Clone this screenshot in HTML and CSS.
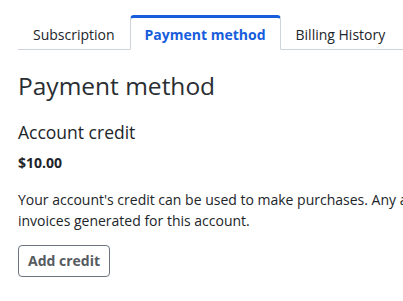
FILE: index.html
```html
<!DOCTYPE html>
<html>
<head>
<meta charset="utf-8">
<link rel="stylesheet" href="styles.css">
</head>
<body>
<div class="page">
  <ul class="tabs">
    <li class="tab">Subscription</li>
    <li class="tab active">Payment method</li>
    <li class="tab">Billing History</li>
  </ul>
  <h1 class="title">Payment method</h1>
  <h2 class="subtitle">Account credit</h2>
  <p class="amount">$10.00</p>
  <p class="desc">Your account's credit can be used to make purchases. Any available credit will be automatically applied towards invoices generated for this account.</p>
  <button class="btn">Add credit</button>
</div>
</body>
</html>
```
FILE: styles.css
```css
html, body {
  margin: 0;
  padding: 0;
  background: #fff;
  overflow: hidden;
}
body {
  font-family: "Open Sans", "Liberation Sans", sans-serif;
  font-size: 14px;
  line-height: 21px;
  color: #212529;
}
.page {
  width: 780px;
  padding: 15px 0 0 18px;
}
.tabs {
  list-style: none;
  margin: 0;
  padding: 0;
  display: flex;
  border-bottom: 1px solid #ced4da;
}
.tab {
  padding: 6px 14px 4px;
  border: 1px solid transparent;
  border-top-width: 3px;
  border-radius: 4px 4px 0 0;
  margin-bottom: -1px;
  color: #212529;
}
.tab.active {
  border-color: #ced4da #ced4da #fff;
  border-top-color: #175ddc;
  color: #175ddc;
  font-weight: 700;
}
.title {
  margin: 21px 0 0;
  font-size: 24.5px;
  line-height: 29px;
  font-weight: 400;
  color: #2a2e33;
}
.subtitle {
  margin: 22px 0 0;
  font-size: 17.5px;
  line-height: 21px;
  font-weight: 400;
}
.amount {
  margin: 9px 0 0;
  font-weight: 700;
}
.desc {
  margin: 16px 0 0;
}
.btn {
  display: block;
  margin-top: 14px;
  font-family: inherit;
  font-size: 14px;
  font-weight: 700;
  line-height: 22px;
  color: #555b61;
  background: #fff;
  border: 1px solid #6c757d;
  border-radius: 4px;
  padding: 4px 9px;
}
```
